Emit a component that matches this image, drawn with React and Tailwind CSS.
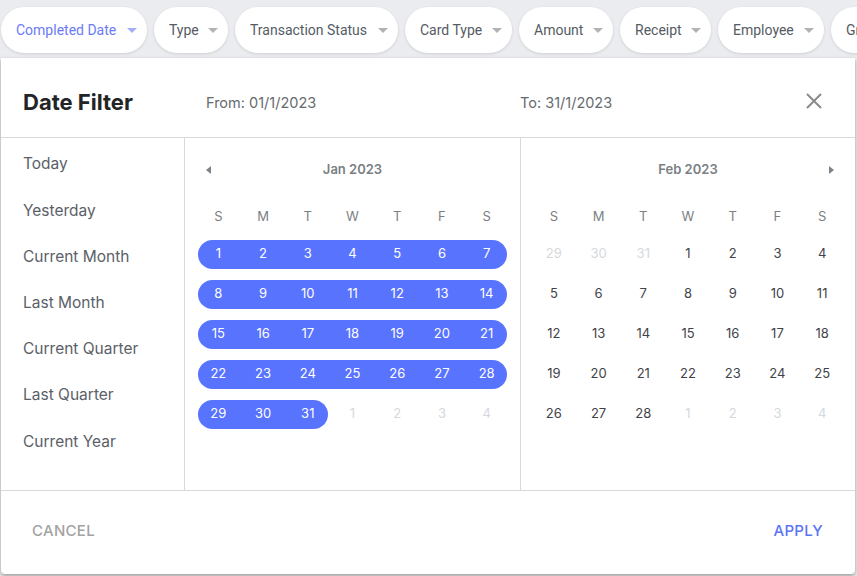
import React from "react";

const filters = [
  { title: "Completed Date", active: true, w: "w-[146px]" },
  { title: "Type", w: "w-[74px]" },
  { title: "Transaction Status", w: "w-[163px]" },
  { title: "Card Type", w: "w-[107px]" },
  { title: "Amount", w: "w-[94px]" },
  { title: "Receipt", w: "w-[91px]" },
  { title: "Employee", w: "w-[106px]" },
  { title: "Group", w: "w-[80px]" },
];

const presets = [
  "Today",
  "Yesterday",
  "Current Month",
  "Last Month",
  "Current Quarter",
  "Last Quarter",
  "Current Year",
];

const weekdays = ["S", "M", "T", "W", "T", "F", "S"];

// each day: { d, inMonth, selected }
const jan = [
  [1, 2, 3, 4, 5, 6, 7],
  [8, 9, 10, 11, 12, 13, 14],
  [15, 16, 17, 18, 19, 20, 21],
  [22, 23, 24, 25, 26, 27, 28],
  [29, 30, 31, 1, 2, 3, 4],
].map((week, w) =>
  week.map((d, i) => {
    const inMonth = !(w === 4 && i > 2);
    return { d, inMonth, selected: inMonth };
  })
);

const feb = [
  [29, 30, 31, 1, 2, 3, 4],
  [5, 6, 7, 8, 9, 10, 11],
  [12, 13, 14, 15, 16, 17, 18],
  [19, 20, 21, 22, 23, 24, 25],
  [26, 27, 28, 1, 2, 3, 4],
].map((week, w) =>
  week.map((d, i) => {
    const inMonth = !((w === 0 && i < 3) || (w === 4 && i > 2));
    return { d, inMonth, selected: false };
  })
);

const Caret = ({ active }) => (
  <svg width="10" height="5" viewBox="0 0 10 5" className="shrink-0">
    <path d="M0 0h10L5 5z" fill={active ? "#a3aefa" : "#b3b3b3"} />
  </svg>
);

const Chip = ({ title, active, w }) => (
  <div
    className={`${w} flex items-center justify-between h-[46px] pl-[15px] pr-[10px] rounded-full bg-white shadow-[0_1px_3px_rgba(0,0,0,0.12)] shrink-0`}
  >
    <span
      className={`text-[14px] ${active ? "text-[#6b7bf7]" : "text-[#555b63]"}`}
      style={{ fontFamily: "Roboto, 'Liberation Sans', sans-serif" }}
    >
      {title}
    </span>
    <Caret active={active} />
  </div>
);

const Month = ({ title, weeks, side }) => (
  <div className="flex flex-col items-center pt-[22px]">
    <div className="w-[313px] h-[20px] flex items-center justify-between px-[10px]">
      {side === "left" ? (
        <svg width="5" height="8" viewBox="0 0 5 8">
          <path d="M5 0v8L0 4z" fill="#7d8489" />
        </svg>
      ) : (
        <span className="w-[5px]" />
      )}
      <span className="text-[13px] font-semibold text-[#7a7f84]">{title}</span>
      {side === "right" ? (
        <svg width="5" height="8" viewBox="0 0 5 8">
          <path d="M0 0v8l5-4z" fill="#7d8489" />
        </svg>
      ) : (
        <span className="w-[5px]" />
      )}
    </div>
    <div className="w-[313px] grid grid-cols-7 mt-[27px] h-[20px] items-center">
      {weekdays.map((w, i) => (
        <span key={i} className="text-center text-[13px] text-[#7a7f84]">
          {w}
        </span>
      ))}
    </div>
    <div className="w-[313px] mt-[7px] flex flex-col">
      {weeks.map((week, wi) => (
        <div key={wi} className="grid grid-cols-7 h-[40px] items-center">
          {week.map((c, i) => {
            const first = c.selected && (i === 0 || !week[i - 1].selected);
            const last = c.selected && (i === 6 || !week[i + 1].selected);
            return (
              <div
                key={i}
                className={`h-[29px] flex items-center justify-center text-[13px] ${
                  c.selected ? "bg-[#5873fd] text-white" : c.inMonth ? "text-[#3f4348]" : "text-[#d5d9dd]"
                } ${first ? "rounded-l-full ml-[2px] pr-[2px]" : ""} ${last ? "rounded-r-full mr-[2px] pl-[2px]" : ""}`}
              >
                {c.d}
              </div>
            );
          })}
        </div>
      ))}
    </div>
  </div>
);

export default function App() {
  return (
    <div
      className="w-[857px] h-[576px] bg-[#ebecef] overflow-hidden"
      style={{ fontFamily: "Inter, 'Noto Sans', sans-serif" }}
    >
      {/* Filter chips */}
      <div className="h-[58px] flex gap-[7px] pt-[7px] pl-[1px] whitespace-nowrap overflow-hidden">
        {filters.map((f) => (
          <Chip key={f.title} title={f.title} active={f.active} w={f.w} />
        ))}
      </div>

      {/* Date filter panel */}
      <div className="ml-[1px] w-[854px] h-[516px] bg-white rounded-b-[4px] shadow-[0_2px_4px_rgba(0,0,0,0.35)] flex flex-col">
        <div className="h-[80px] shrink-0 border-b border-[#d9d9d9] flex items-center pl-[22px] pr-[33px] pt-[10px]">
          <span className="w-[183px] text-[22px] font-bold text-[#222426]">Date Filter</span>
          <span className="w-[314px] text-[14.5px] text-[#666b70]">From: 01/1/2023</span>
          <span className="flex-1 text-[14.5px] text-[#666b70]">To: 31/1/2023</span>
          <svg width="16" height="16" viewBox="0 0 16 16" className="mb-[4px]">
            <path d="M1 1l14 14M15 1L1 15" stroke="#8a8a8a" strokeWidth="2" />
          </svg>
        </div>

        <div className="h-[353px] shrink-0 border-b border-[#d9d9d9] flex">
          <div className="w-[184px] shrink-0 border-r border-[#d9d9d9] pt-[3px]">
            {presets.map((p) => (
              <div key={p} className="h-[46.2px] flex items-center pl-[22px] text-[15.5px] text-[#5b6068]">
                {p}
              </div>
            ))}
          </div>
          <div className="w-[336px] shrink-0 border-r border-[#d9d9d9]">
            <Month title="Jan 2023" weeks={jan} side="left" />
          </div>
          <div className="flex-1">
            <Month title="Feb 2023" weeks={feb} side="right" />
          </div>
        </div>

        <div className="flex-1 flex items-center justify-between pl-[31px] pr-[32px] pb-[3px]">
          <span className="text-[15px] font-medium text-[#a3a3a3] tracking-[0.3px]">CANCEL</span>
          <span className="text-[15px] font-medium text-[#5b74f6] tracking-[0.3px]">APPLY</span>
        </div>
      </div>
    </div>
  );
}
